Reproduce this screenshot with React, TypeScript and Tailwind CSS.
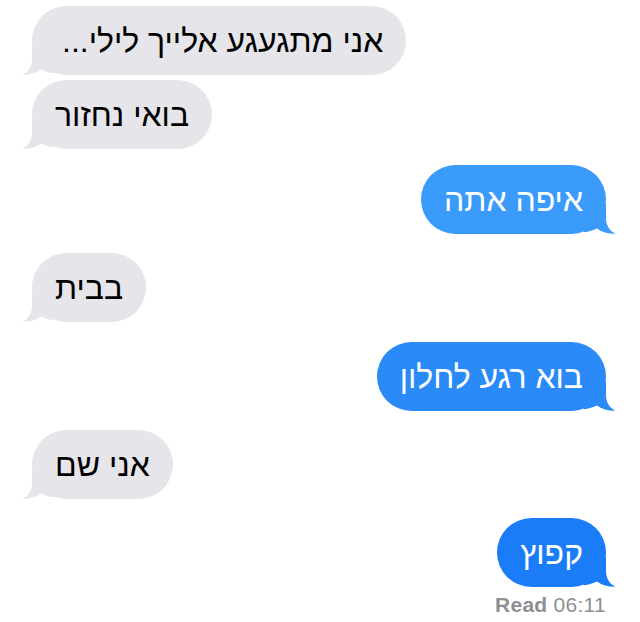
import React from "react";

type Msg = { text: string; mine: boolean; bg: string; mt: string; pad: string };

const messages: Msg[] = [
  { text: "אני מתגעגע אלייך לילי...", mine: false, bg: "#e5e5ea", mt: "mt-0", pad: "pl-[30px] pr-[23px]" },
  { text: "בואי נחזור", mine: false, bg: "#e5e5ea", mt: "mt-[5px]", pad: "px-[23px]" },
  { text: "איפה אתה", mine: true, bg: "#3a9bfa", mt: "mt-[16px]", pad: "px-[23px]" },
  { text: "בבית", mine: false, bg: "#e5e5ea", mt: "mt-[19px]", pad: "px-[23px]" },
  { text: "בוא רגע לחלון", mine: true, bg: "#2a8bf8", mt: "mt-[20px]", pad: "px-[23px]" },
  { text: "אני שם", mine: false, bg: "#e5e5ea", mt: "mt-[19px]", pad: "px-[23px]" },
  { text: "קפוץ", mine: true, bg: "#1b7cf7", mt: "mt-[19px]", pad: "px-[23px]" },
];

// Curved tail hanging off the bottom corner of a bubble
function Tail({ color, mine }: { color: string; mine: boolean }) {
  return (
    <svg
      width="32"
      height="30"
      viewBox="0 0 32 30"
      className={
        mine
          ? "absolute bottom-0 right-[-10px] -scale-x-100"
          : "absolute bottom-0 left-[-10px]"
      }
    >
      <path
        d="M10 0 L10 14 C10 22 6 27 0.5 29.6 C8 30.2 14 28 19 24.5 C23 26.5 27 27.6 32 28.2 L32 0 Z"
        fill={color}
      />
    </svg>
  );
}

function Bubble({ m }: { m: Msg }) {
  return (
    <div className={`flex ${m.mine ? "justify-end" : "justify-start"} ${m.mt}`}>
      <div
        className={`relative flex h-[69px] items-center rounded-[35px] ${m.pad}`}
        style={{ backgroundColor: m.bg }}
      >
        <Tail color={m.bg} mine={m.mine} />
        <span
          dir="rtl"
          className={`relative text-[32px] leading-none ${m.mine ? "text-white" : "text-black"}`}
        >
          {m.text}
        </span>
      </div>
    </div>
  );
}

export default function App() {
  return (
    <div
      className="flex h-[622px] w-[640px] flex-col bg-white pl-[32px] pr-[34px] pt-[6px]"
      style={{ fontFamily: '"Liberation Sans", Arial, sans-serif' }}
    >
      {messages.map((m, i) => (
        <Bubble key={i} m={m} />
      ))}
      <div className="mt-[7px] flex justify-end text-[21px] leading-none tracking-[0.3px] text-[#8e8e93]">
        <span className="font-bold">Read</span>
        <span className="ml-[6px]">06:11</span>
      </div>
    </div>
  );
}
